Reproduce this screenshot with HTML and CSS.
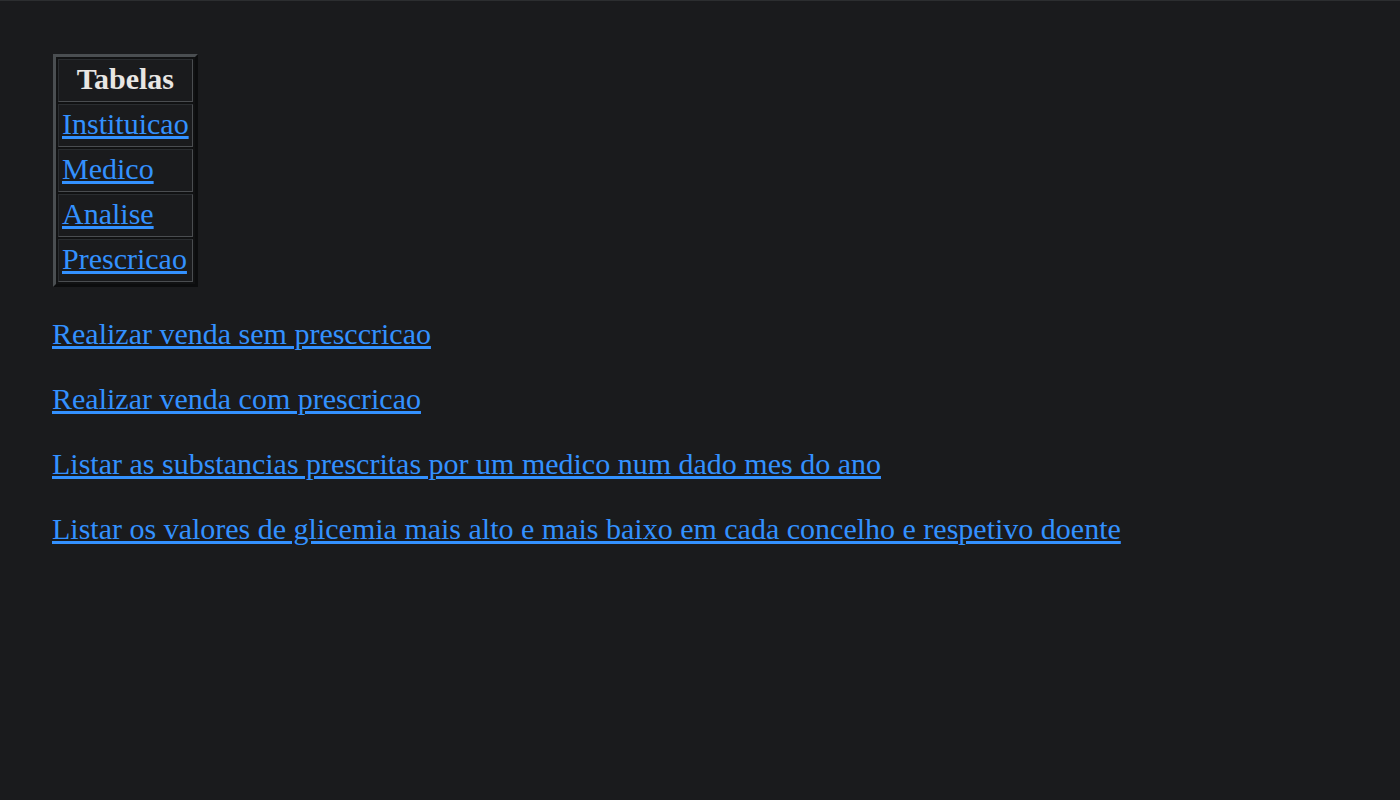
FILE: index.html
```html
<!DOCTYPE html>
<html>
<head>
<meta charset="utf-8">
<link rel="stylesheet" href="styles.css">
</head>
<body>
<div class="topline"></div>
<main class="page">
  <table class="tables">
    <tr><th class="head">Tabelas</th></tr>
    <tr><td class="cell"><a href="#">Instituicao</a></td></tr>
    <tr><td class="cell"><a href="#">Medico</a></td></tr>
    <tr><td class="cell"><a href="#">Analise</a></td></tr>
    <tr><td class="cell"><a href="#">Prescricao</a></td></tr>
  </table>
  <p class="item first"><a href="#">Realizar venda sem presccricao</a></p>
  <p class="item"><a href="#">Realizar venda com prescricao</a></p>
  <p class="item"><a href="#">Listar as substancias prescritas por um medico num dado mes do ano</a></p>
  <p class="item"><a href="#">Listar os valores de glicemia mais alto e mais baixo em cada concelho e respetivo doente</a></p>
</main>
</body>
</html>
```

FILE: styles.css
```css
html, body {
  margin: 0;
  padding: 0;
  background: #1a1b1d;
  height: 100%;
}
body {
  font-family: "Liberation Serif", "Times New Roman", serif;
  font-size: 30px;
  line-height: 35px;
  color: #e8e6e3;
}
.topline {
  height: 1px;
  background: #2c2e30;
}
.page {
  padding: 53px 0 0 53px;
}
.tables {
  border-collapse: separate;
  border-spacing: 2px;
  border: 3px solid;
  border-color: #4a4e51 #0c0d0e #0c0d0e #4a4e51;
  background: #111213;
  margin: 0;
}
.head, .cell {
  border: 1px solid;
  border-color: #2a2d30 #4a4d50 #4a4d50 #2a2d30;
  padding: 1px 3px 5px 3px;
  background: #1a1b1d;
}
.head {
  font-weight: bold;
  text-align: center;
}
.cell {
  text-align: left;
}
a {
  color: #3391ff;
  text-decoration: underline;
}
.item {
  margin: 30px 0 30px -1px;
}
.item.first {
  margin-top: 29px;
}
```
